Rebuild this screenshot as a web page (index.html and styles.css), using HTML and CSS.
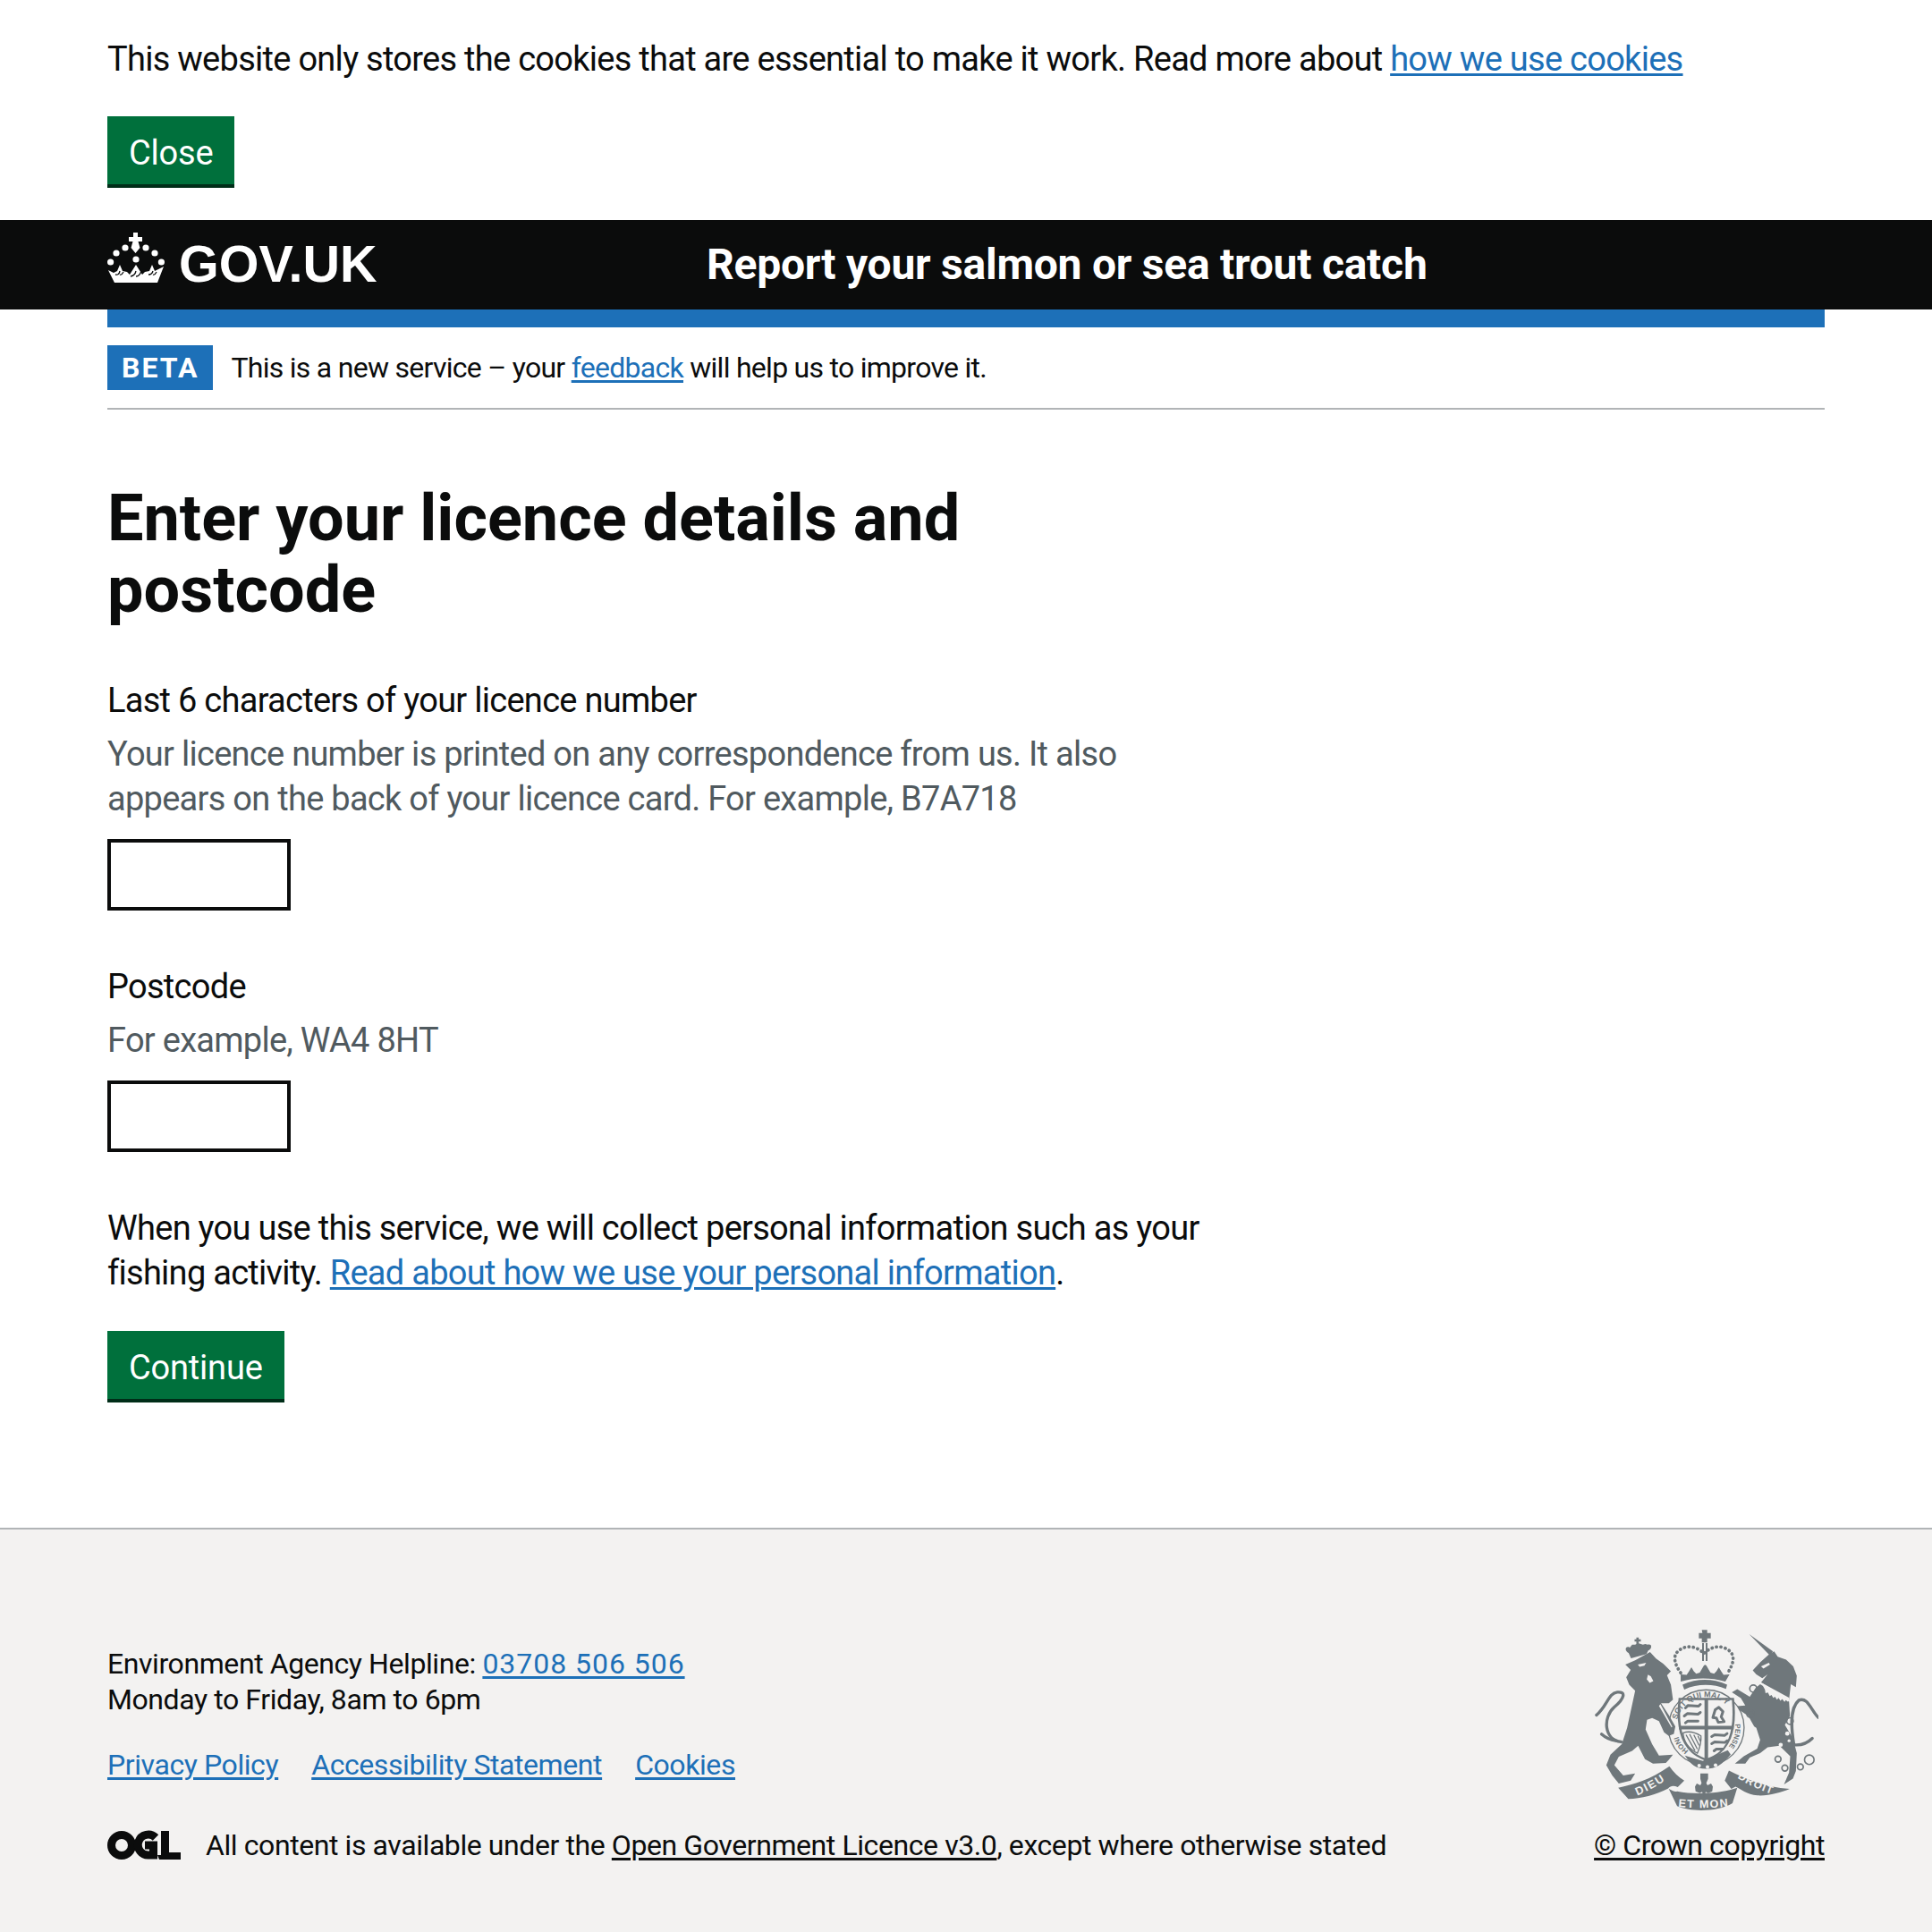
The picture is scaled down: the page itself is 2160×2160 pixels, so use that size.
FILE: index.html
```html
<!DOCTYPE html>
<html lang="en">
<head>
<meta charset="utf-8">
<title>Enter your licence details and postcode</title>
<link rel="stylesheet" href="styles.css">
</head>
<body>
<div class="cookie">
  <p class="cookie-text">This website only stores the cookies that are essential to make it work. Read more about <a href="#">how we use cookies</a></p>
  <button class="btn">Close</button>
</div>
<header class="header">
  <div class="logo">
    <svg class="crown" viewBox="0 0 64 60" aria-hidden="true">
      <g fill="#fff">
        <path d="M29 0h5v5h5v5h-4.500l2 7-5 6-5-6 2-7H24V5h5z"/>
        <circle cx="20" cy="17" r="3.600"/><circle cx="43" cy="17" r="3.600"/>
        <circle cx="10" cy="23" r="3.600"/><circle cx="53" cy="23" r="3.600"/>
        <circle cx="3.600" cy="33" r="3.600"/><circle cx="60.400" cy="33" r="3.600"/>
        <circle cx="32" cy="30" r="3.600"/>
        <path d="M1 42l6 3 4-2 3-7 3 7 5 1 3 3 7-11 7 11 3-3 5-1 3-7 3 7 4-2 6-3-7 18H8z"/>
      </g>
      <g fill="none" stroke="#0b0c0c" stroke-width="1.300">
        <path d="M9 47q4 1 5-4m0 4q2 1 4-3M26 49q5-1 6-6m0 6q4 0 6-6M46 47q4 0 5-4m0 4q2 1 4-3"/>
      </g>
    </svg>
    <span class="logo-text">GOV.UK</span>
  </div>
  <div class="service">Report your salmon or sea trout catch</div>
</header>
<div class="container">
  <div class="blue-bar"></div>
  <div class="phase">
    <strong class="tag">BETA</strong>
    <span class="phase-text">This is a new service – your <a href="#">feedback</a> will help us to improve it.</span>
  </div>
  <main class="main">
    <h1 class="title">Enter your licence details and postcode</h1>
    <div class="field">
      <label class="label">Last 6 characters of your licence number</label>
      <div class="hint">Your licence number is printed on any correspondence from us. It also appears on the back of your licence card. For example, B7A718</div>
      <input class="input" type="text">
    </div>
    <div class="field">
      <label class="label">Postcode</label>
      <div class="hint">For example, WA4 8HT</div>
      <input class="input" type="text">
    </div>
    <p class="body">When you use this service, we will collect personal information such as your fishing activity. <a href="#">Read about how we use your personal information</a>.</p>
    <button class="btn">Continue</button>
  </main>
</div>
<footer class="footer">
  <div class="footer-left">
    <p class="help">Environment Agency Helpline: <a class="tel" href="#">03708 506 506</a><br>Monday to Friday, 8am to 6pm</p>
    <ul class="links">
      <li><a href="#">Privacy Policy</a></li>
      <li><a href="#">Accessibility Statement</a></li>
      <li><a href="#">Cookies</a></li>
    </ul>
    <div class="licence">
      <svg class="ogl" viewBox="0 0 82 34" aria-hidden="true">
        <circle cx="16" cy="17" r="11.500" fill="none" stroke="#0b0c0c" stroke-width="9"/>
        <path d="M54 8.500A11.500 11.500 0 1 0 47 28h4.500V17H42" fill="none" stroke="#0b0c0c" stroke-width="9"/>
        <path d="M60 1h9v24h13v8H58l-2-5h4z" fill="#0b0c0c"/>
      </svg>
      <span>All content is available under the <a class="dark" href="#">Open Government Licence v3.0</a>, except where otherwise stated</span>
    </div>
  </div>
  <div class="footer-right">
    <svg class="arms" viewBox="70 55 750 610" role="img" aria-label="Royal coat of arms">
      <defs>
        <path id="garter-top" d="M346 358A101 101 0 0 1 542 358"/>
        <path id="garter-right" d="M541 372A98 98 0 0 1 505 462"/>
        <path id="garter-left" d="M384 462A98 98 0 0 1 346 392"/>
        <path id="rib-l" d="M212 612Q268 590 325 548"/>
        <path id="rib-r" d="M548 552Q600 588 680 612"/>
        <path id="rib-c" d="M350 650Q435 659 530 647"/>
      </defs>
      <!-- Garter and shield -->
      <circle cx="444" cy="384" r="127" fill="none" stroke="#6f777b" stroke-width="4"/>
      <path d="M351 284h186c8 70 2 130-30 170-18 22-40 34-63 42-23-8-45-20-63-42-32-40-38-100-30-170z" fill="#6f777b"/>
      <path d="M358 292h172c6 66 0 122-28 158-16 20-38 32-58 38-20-6-42-18-58-38-28-36-34-92-28-158z" fill="#f3f2f1"/>
      <path d="M438 288h12v90h86v12h-86v102h-12V390h-86v-12h86z" fill="#6f777b"/>
      <g fill="none" stroke="#6f777b" stroke-width="9" stroke-linecap="round" stroke-linejoin="round">
        <path d="M374 318l8-8 36 2 6-6M370 345l10-8 36 2 8-6M374 368l8-6 34 0"/>
        <path d="M466 350l8-26 12-8 14 14-6 18 10 16-20 2-6-14z"/>
        <path d="M462 414l10-6 34 2 8-6M462 438l10-6 34 2 8-6M470 462l8-6 22 0"/>
      </g>
      <g fill="none" stroke="#6f777b" stroke-width="4">
        <path d="M366 402c20-8 44 0 60 10 2 22-4 40-12 58-26-14-46-36-48-68z"/>
        <path d="M376 408l30 54M388 406l26 50M402 408l18 36M416 412l8 18"/>
      </g>
      <path d="M372 478l60 18 84-36 10 14c-30 36-50 48-84 48s-48-12-70-44z" fill="#6f777b"/>
      <circle cx="420" cy="512" r="6" fill="#f3f2f1"/><circle cx="448" cy="516" r="6" fill="#f3f2f1"/><circle cx="475" cy="510" r="6" fill="#f3f2f1"/>

      <g fill="#6f777b">
        <!-- Lion -->
        <path d="M172 172L205 158L255 130L275 152L300 170L325 195L312 208L325 240L332 290L318 302L292 302L320 345L340 380L335 405L318 412L302 400L285 362L262 352L245 358L240 390L262 440L285 478L332 475L318 492L308 503L265 505L238 490L215 445L195 462L150 482L135 510L165 545L205 538L190 562L150 572L128 545L108 510L122 475L160 440L178 385L192 320L205 260L185 240L175 215L190 190Z"/>
        <!-- Lion crown -->
        <path d="M191 151l-8-18c-8-4-12-12-8-18 4-4 10-2 12 0l8-10 10 0 4-2 0-8-6 0 0-8 6 0 0-6 8 0 0 6 7 0 0 8-7 0 0 6 14 4 8-2 8 2c6-2 12 0 12 6 0 8-6 12-10 14l-6 12z"/>
        <!-- Unicorn -->
        <path d="M588 70L668 128L658 142Z"/>
        <path d="M655 138L672 128L684 146L712 156L736 178L748 210L745 248L728 238L722 290L628 232L650 205L632 218L612 205L600 192L625 165Z"/>
        <path d="M625 238L722 296L725 345L708 375L735 420L748 470L745 530L735 555L705 575L722 535L726 480L690 445L650 450L625 470L590 485L575 505L540 505L570 480L615 455L625 425L612 385L605 380L585 345L555 325L548 312L575 310L560 285L530 265L548 255L590 280L610 250Z"/>
        <!-- Crown -->
        <path d="M429 56h18v10h12v18h-12v14h-18V84h-10V66h12z"/>
        <path d="M430 100h6v60h-6zM442 100h6v60h-6z"/>
        <path d="M358 205l20 2 8-12 8-14 8 14 8 8 12-4 14-24 4-2 4 2 14 24 12 4 8-8 8-14 8 14 8 12 20-2-14 24c-50-14-100-14-150 0z"/>
        <path d="M364 240c50-22 100-22 150 0l-4 14c-44-18-96-18-140 2z"/>
        <!-- Scroll -->
        <path d="M148 586c50-10 110-28 172-72 14 20 30 36 50 48l-22 22c-12-6-24-6-32 4-40 22-92 34-134 36z"/>
        <path d="M520 528c50 26 120 56 204 62-30 12-70 24-108 22-38-4-52-20-74-30l-14 8-22-28z"/>
        <path d="M318 590c16 8 20 10 28 8 50 10 130 10 190-8l12-4-16 52c-50 30-140 30-186 10z"/>
        <!-- Fleur -->
        <path d="M424 538h26v18l-6 14 4 8 12-6 6 10-2 16-14 6-8-4-6 20-6-20-8 4-14-6-2-16 6-10 12 6 4-8-4-14z"/>
      </g>
      <!-- Tails -->
      <g fill="none" stroke="#6f777b" stroke-width="10" stroke-linecap="round">
        <path d="M158 432C100 425 95 350 135 315 170 285 175 262 145 265 115 268 112 310 75 342"/>
        <path d="M140 428Q112 424 92 406"/>
        <path d="M738 440C730 390 722 320 755 292 785 280 795 325 820 350"/>
        <path d="M740 442Q775 445 800 420"/>
      </g>
      <!-- Crown pearls -->
      <path d="M358 200C330 160 330 130 370 115c26-8 50 4 66 20 16-16 40-28 66-20 40 15 40 45 14 85" fill="none" stroke="#6f777b" stroke-width="11" stroke-dasharray="1 14" stroke-linecap="round"/>
      <!-- Chain links -->
      <g fill="none" stroke="#6f777b" stroke-width="5">
        <circle cx="602" cy="253" r="12"/>
        <circle cx="592" cy="338" r="12"/>
        <circle cx="725" cy="362" r="11"/>
        <circle cx="685" cy="490" r="10"/>
        <circle cx="708" cy="520" r="10"/>
        <circle cx="760" cy="516" r="10"/>
        <circle cx="790" cy="492" r="16"/>
      </g>
      <g fill="#f3f2f1">
        <path d="M628 232l95 52-4 14-8-6-4 6-8-10-6 6-6-10-6 6-6-10-6 4-6-10-6 4-6-12-8 2-2-12z"/>
        <circle cx="716" cy="404" r="7"/><circle cx="694" cy="442" r="7"/><circle cx="722" cy="428" r="5"/>
        <path d="M628 178l26-12 4 6-22 14z"/>
        <path d="M214 172l28-6-6 10-16 4z"/>
        <path d="M248 206l10 6 8 16-12 6-10-12z"/>
        <path d="M290 305l40 76-3 2-42-72z"/>
      </g>
      <g fill="#6f777b" class="arms-text">
        <text font-size="27"><textPath href="#garter-top">SOIT QUI MAL Y</textPath></text>
        <text font-size="24"><textPath href="#garter-right">PENSE</textPath></text>
        <text font-size="24"><textPath href="#garter-left">HONI</textPath></text>
      </g>
      <g fill="#f3f2f1" class="arms-text">
        <text font-size="38" letter-spacing="5"><textPath href="#rib-l">DIEU</textPath></text>
        <text font-size="36" letter-spacing="4"><textPath href="#rib-r">DROIT</textPath></text>
        <text font-size="38" letter-spacing="4"><textPath href="#rib-c">ET MON</textPath></text>
      </g>
    </svg>
    <a class="dark" href="#">© Crown copyright</a>
  </div>
</footer>
</body>
</html>
```

FILE: styles.css
```css
* {
  box-sizing: border-box;
}
html, body {
  margin: 0;
  padding: 0;
  background: #fff;
}
body {
  font-family: Roboto, sans-serif;
  color: #0b0c0c;
  font-size: 38px;
  line-height: 50px;
  letter-spacing: -0.019em;
}
a {
  color: #1d70b8;
  text-underline-offset: 3px;
  text-decoration-thickness: 3px;
}
a.dark {
  color: #0b0c0c;
}
.cookie {
  padding: 41px 120px 36px;
}
.cookie-text {
  margin: 0 0 39px;
}
.btn {
  display: block;
  height: 80px;
  margin: 0;
  padding: 1px 24px 0;
  border: 0;
  border-radius: 0;
  background: #00703c;
  box-shadow: inset 0 -4px 0 #002d18;
  color: #fff;
  font: 38px/50px Roboto, sans-serif;
  letter-spacing: -0.005em;
}
.header {
  display: flex;
  align-items: center;
  height: 100px;
  padding: 0 120px;
  background: #0b0c0c;
  color: #fff;
}
.logo {
  display: flex;
  align-items: center;
  gap: 16px;
  width: 670px;
}
.crown {
  width: 64px;
  height: 60px;
  margin-bottom: 12px;
}
.logo-text {
  font: 700 57.500px/1 "Liberation Sans", sans-serif;
  letter-spacing: 0;
}
.service {
  font-size: 48px;
  font-weight: 700;
  line-height: 60px;
  letter-spacing: -0.005em;
}
.container {
  padding: 0 120px;
}
.blue-bar {
  height: 20px;
  background: #1d70b8;
}
.phase {
  display: flex;
  align-items: center;
  gap: 20px;
  padding: 20px 0;
  border-bottom: 2px solid #b1b4b6;
}
.tag {
  padding: 0 16px;
  background: #1d70b8;
  color: #fff;
  font-size: 32px;
  line-height: 50px;
  letter-spacing: 2px;
}
.phase-text {
  font-size: 32px;
  line-height: 50px;
}
.main {
  width: 1300px;
  padding: 82px 0 140px;
}
.title {
  margin: 0 0 58px;
  width: 1060px;
  font-size: 72px;
  line-height: 80px;
  font-weight: 700;
  letter-spacing: 0;
}
.field {
  margin-bottom: 60px;
}
.label {
  display: block;
  margin-bottom: 10px;
}
.hint {
  margin-bottom: 20px;
  color: #505a5f;
  width: 1180px;
}
.input {
  display: block;
  width: 205px;
  height: 80px;
  padding: 10px;
  border: 4px solid #0b0c0c;
  border-radius: 0;
  background: #fff;
  font: 38px Roboto, sans-serif;
}
.body {
  margin: 0 0 40px;
  width: 1300px;
}
.footer {
  display: flex;
  justify-content: space-between;
  align-items: flex-end;
  height: 452px;
  padding: 0 120px 77px;
  border-top: 2px solid #b1b4b6;
  background: #f3f2f1;
  font-size: 32px;
  line-height: 40px;
  letter-spacing: -0.013em;
}
.tel {
  letter-spacing: 0.030em;
}
.help {
  margin: 0 0 33px;
}
.links {
  display: flex;
  gap: 37px;
  margin: 0 0 50px;
  padding: 0;
  list-style: none;
}
.licence {
  display: flex;
  align-items: center;
  gap: 28px;
}
.ogl {
  width: 82px;
  height: 34px;
}
.footer-right {
  display: flex;
  flex-direction: column;
  align-items: flex-end;
  gap: 18px;
}
.arms {
  display: block;
  width: 250px;
  height: 203px;
  margin-right: 7px;
}
.arms-text {
  font-family: "Liberation Sans", sans-serif;
  font-weight: 700;
  letter-spacing: 0;
}
```
